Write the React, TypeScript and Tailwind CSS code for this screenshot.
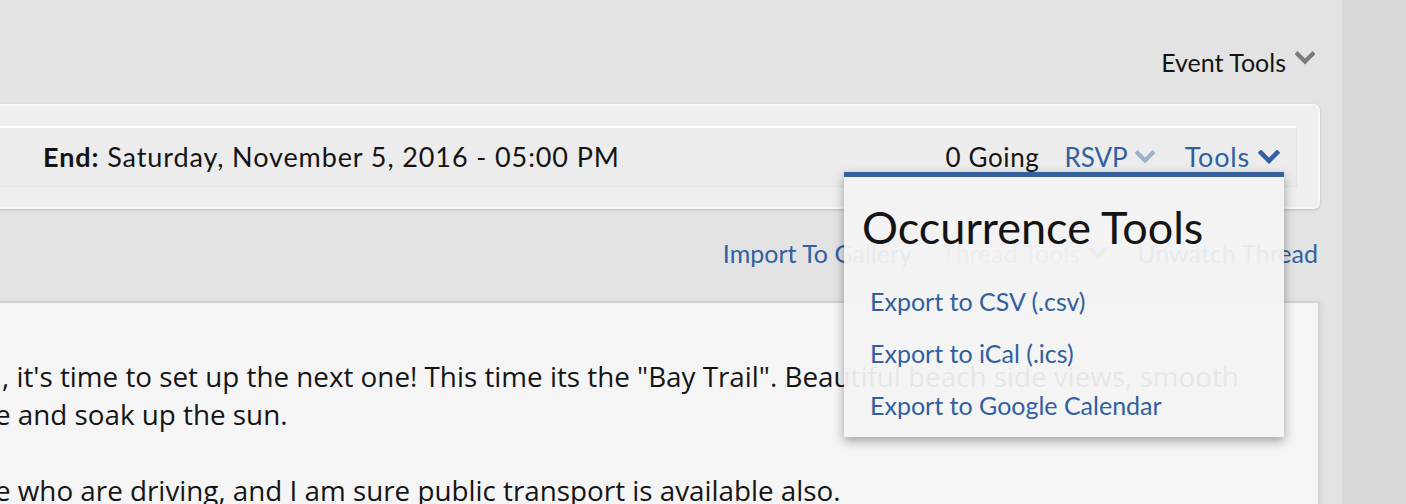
function Chevron({ className }: { className: string }) {
  return (
    <svg viewBox="0 0 20 13" className={className} fill="none">
      <path d="M2.5 2.5 L10 10 L17.5 2.5" stroke="currentColor" strokeWidth="4.2" strokeLinecap="square" />
    </svg>
  );
}

export default function App() {
  return (
    <div className="flex h-[504px] w-[1406px] overflow-hidden bg-[#d9d9d9] font-['Lato',sans-serif] text-[#141414]">
      <div className="relative w-[1342px] shrink-0 bg-[#e3e3e3] pr-[22px]">
        {/* event tools */}
        <div className="flex h-[104px] items-start justify-end pr-[5px] pt-[46px]">
          <span className="text-[25px] leading-[32px]">Event Tools</span>
          <Chevron className="ml-[9px] mt-[5px] h-[14px] w-[20px] text-[#7b7b7b]" />
        </div>

        {/* event box */}
        <div className="ml-[-20px] h-[105px] rounded-[6px] border-2 border-[#f8f8f8] bg-[#efefef] pr-[21px] pt-[20px] shadow-[0_1px_3px_rgba(0,0,0,0.18)]">
          <div className="flex h-[61px] items-center justify-between border border-[#e3e3e3] border-t-2 border-t-white bg-[#ececec] pl-[60px] pr-[16px] text-[26px] leading-[32px]">
            <div className="text-[27px] tracking-[0.9px]">
              <span className="font-bold">End:</span> Saturday, November 5, 2016 - 05:00 PM
            </div>
            <div className="flex items-center">
              <span className="tracking-[0.6px]">0 Going</span>
              <span className="ml-[25px] text-[#30609f]">RSVP</span>
              <Chevron className="ml-[7px] h-[14px] w-[20px] text-[#9bb1cd]" />
              <span className="ml-[30px] text-[27px] tracking-[0.8px] text-[#30609f]">Tools</span>
              <Chevron className="ml-[8px] h-[14px] w-[22px] text-[#30609f]" />
            </div>
          </div>
        </div>

        {/* thread links */}
        <div className="flex h-[92px] items-start justify-end gap-[29px] pr-[2px] pt-[28px] text-[25px] leading-[32px]">
          <span className="text-[#30609f]">Import To Gallery</span>
          <span className="flex items-center text-[#8a8a8a]">
            Thread Tools
            <Chevron className="ml-[8px] h-[14px] w-[20px] text-[#8a8a8a]" />
          </span>
          <span className="text-[#30609f]">Unwatch Thread</span>
        </div>

        {/* post */}
        <div className="ml-[-20px] h-[220px] border-2 border-[#d3d3d3] bg-[#f5f5f5] pl-[18px] pt-[54px] font-['Open_Sans',sans-serif] text-[27.8px] leading-[38px] shadow-[2px_2px_6px_rgba(0,0,0,0.06)]">
          <div className="ml-[2px] whitespace-nowrap">
            , it's time to set up the next one! This time its the "Bay Trail". Beautiful beach side views, smooth
          </div>
          <div className="ml-[-5px] whitespace-nowrap">e and soak up the sun.</div>
          <div className="h-[38px]" />
          <div className="ml-[-5px] whitespace-nowrap">
            e who are driving, and I am sure public transport is available also.
          </div>
        </div>

        {/* occurrence tools menu */}
        <div className="absolute left-[844px] top-[172px] h-[265px] w-[440px] border-t-[5px] border-[#34619c] bg-[rgba(243,243,243,0.94)] shadow-[0_4px_10px_rgba(0,0,0,0.35)]">
          <div className="pl-[18px] pt-[21px] text-[45px] leading-[58px]">Occurrence Tools</div>
          <div className="mt-[29px] flex flex-col gap-[20px] pl-[26px] text-[25px] leading-[32px] text-[#30609f]">
            <span>Export to CSV (.csv)</span>
            <span>Export to iCal (.ics)</span>
            <span>Export to Google Calendar</span>
          </div>
        </div>
      </div>
    </div>
  );
}
